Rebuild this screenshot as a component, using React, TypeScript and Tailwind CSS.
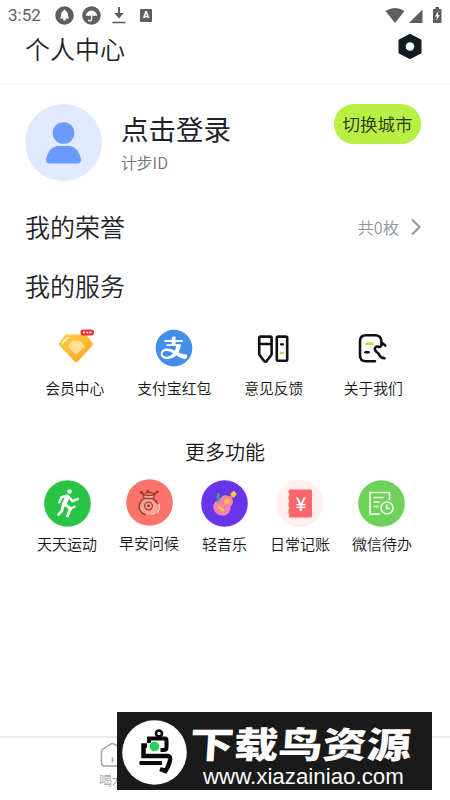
import type { ReactNode } from "react";
import { AiFillAlipayCircle } from "react-icons/ai";

type Item = {
  label: string;
  icon: ReactNode;
};

const VipIcon = () => (
  <svg width="40" height="40" viewBox="0 0 40 40">
    <defs>
      <linearGradient id="gem" x1="0" y1="0" x2="1" y2="1">
        <stop offset="0" stopColor="#ffd04a" />
        <stop offset="1" stopColor="#fba21c" />
      </linearGradient>
    </defs>
    <path
      d="M12 6.500h17.500q1.500 0 2.500 1.200L37.600 15q.8 1.200-.2 2.500L23 33.300q-1.800 1.700-3.600 0L4.400 17.500q-1-1.300-.1-2.500L9.500 7.700q1-1.200 2.500-1.200z"
      fill="url(#gem)"
    />
    <path d="M17 13h8.500l4.500 5.500-7.700 7.300q-1.300 1-2.600 0L13 18.500z" fill="#ffdf90" />
    <path d="M7.500 15l4.500-4.800 2-.4" stroke="#fff" strokeWidth="1.300" fill="none" strokeLinecap="round" />
    <rect x="25.500" y="1.500" width="13.500" height="6" rx="2.800" fill="#e8333a" />
    <path d="M28 4.500h2M31.200 4.500h2M34.400 4.500h2" stroke="#fff" strokeWidth="1.700" />
  </svg>
);

const FeedbackIcon = () => (
  <svg width="40" height="40" viewBox="0 0 40 40" fill="none" stroke="#111" strokeWidth="2.600" strokeLinejoin="round" strokeLinecap="round">
    <path d="M5.200 10q0-1.400 1.400-1.400h9.600q1.400 0 1.400 1.400v16.500l-4.700 6.300q-1.500 1.500-3 0L5.200 26.500zM5.200 16h12.400" />
    <rect x="22.800" y="8.600" width="10.400" height="24.200" rx="1.500" />
    <path d="M27 16.300h2" strokeWidth="2.200" />
    <path d="M27 25h2" stroke="#b3e748" strokeWidth="2.600" />
  </svg>
);

const AboutIcon = () => (
  <svg width="40" height="40" viewBox="0 0 40 40" fill="none" stroke="#111" strokeWidth="2.600" strokeLinejoin="round" strokeLinecap="round">
    <path d="M22 33.300H13q-6 0-6-6V13.300q0-6 6-6h9q6.300 0 6.500 6.500v2.500M28.500 14.500l3.800 3" />
    <path d="M28.500 15c.2 3.500-1.200 4.500-3.200 3.700-2.200-.8-4 .8-3.300 3.300.8 2.500 3 2 4 4.500.8 2 2.500 3.500 5.500 3.800" />
    <path d="M12.500 15.700h8" stroke="#b3e748" strokeLinecap="butt" />
    <path d="M12.500 24.300h3" />
  </svg>
);

const RunIcon = () => (
  <svg width="47" height="47" viewBox="0 0 47 47" fill="none" stroke="#fff" strokeLinecap="round" strokeLinejoin="round">
    <circle cx="23.500" cy="23.500" r="23.300" fill="#28c445" stroke="none" />
    <circle cx="25.500" cy="11.500" r="2.300" fill="#fff" stroke="none" />
    <path d="M23.500 17l-3.500 7.500" strokeWidth="4.500" />
    <path d="M22.500 15.800l-5 1.500-2.300 5M25 17l3.500 4.200 5.300-2.200" strokeWidth="2.500" />
    <path d="M21 24.500l5.500 4-3 7.500M18.800 26.500l-1 4.500-3.300 3.500" strokeWidth="2.900" />
    <path d="M27 28.500l4-2" strokeWidth="2" />
  </svg>
);

const MorningIcon = () => (
  <svg width="47" height="47" viewBox="0 0 47 47" fill="none" stroke="#9b3c36" strokeWidth="1.300" strokeLinecap="round" strokeLinejoin="round">
    <circle cx="23.500" cy="23.500" r="23.300" fill="#f9746a" stroke="none" />
    <path d="M18 19.500q-4.500 3-5 8.500 .8 6.500 7 8h6q6-2 6.500-8.500-.3-5-5-8z" fill="#fba293" stroke="none" />
    <path d="M18 19.500q-4.500 3-5 8.500 .5 5.500 6 7.500" strokeWidth="1.500" />
    <path d="M17 15.500q5.500 2 12 0-2 2-1 4H18q.5-2-1-4z" fill="#fbb09f" />
    <path d="M14.500 14l3.500 .8M20 14q2.500-2 6 0M27.500 14.500l4-1M27 20l5 5M30 21l1 3" />
    <circle cx="22.500" cy="27" r="3.800" />
    <circle cx="22.500" cy="27" r="1.400" fill="#9b3c36" stroke="none" />
    <path d="M33 25q1.500 5-1.500 8M27 35l2-1" stroke="#ffdacb" />
    <path d="M15 13.300h1M21.500 12h.3M31 12.800h.5" strokeWidth="2.400" />
  </svg>
);

const MusicIcon = () => (
  <svg width="47" height="47" viewBox="0 0 47 47">
    <circle cx="23.500" cy="23.500" r="23.300" fill="#6835eb" />
    <path d="M28 20l4-5" stroke="#f26c9b" strokeWidth="3.500" />
    <path
      d="M14 22q4-1 6-4.500 3-3.500 7.500-1.500 5 2.500 4.500 6.500-.5 2.500-2.500 4 .5 6-4.500 8.500-6.500 2-10.500-2.500-4.500-5.500-.5-10.500z"
      fill="#f681ad"
    />
    <circle cx="26" cy="21.200" r="2.700" fill="#ffc62f" />
    <path d="M18 27l3.800 3" stroke="#ffc62f" strokeWidth="2.600" strokeLinecap="round" />
    <path d="M31 14l1.800-1.700 1.500 1.700-1.500 1.800z" fill="#ffc62f" stroke="#ffc62f" strokeWidth="2.600" strokeLinejoin="round" />
    <path d="M16.500 13.500q2 1.500 .5 3.200-1 1.500 .8 2.300 .2 1.500-2 2.500" stroke="#39aa80" strokeWidth="2.300" fill="none" />
  </svg>
);

const LedgerIcon = () => (
  <div className="relative flex h-[47px] w-[47px] items-center justify-center rounded-full bg-[#ffefed]">
    <svg width="47" height="47" viewBox="0 0 47 47">
      <rect x="12.500" y="9.500" width="23.500" height="28" rx="1.500" fill="#fb666a" />
      <path d="M12.200 13v24" stroke="#ffefed" strokeWidth="2" strokeDasharray="3 3.800" />
    </svg>
    <span className="absolute left-[17px] top-[12px] w-[15px] text-center font-['Noto_Sans_CJK_SC'] text-[19px] font-medium leading-[22px] text-white">
      ¥
    </span>
  </div>
);

const TodoIcon = () => (
  <svg width="47" height="47" viewBox="0 0 47 47" fill="none" stroke="#f1ffe9" strokeWidth="1.700" strokeLinejoin="round">
    <circle cx="23.500" cy="23.500" r="23.300" fill="#6ed159" stroke="none" />
    <path d="M31.500 20V12.500h-19.500V34H22" />
    <path d="M15.500 17.500h10M15.500 22h6M15.500 26.500h5" />
    <circle cx="29" cy="28" r="6" />
    <path d="M28.700 24.500v4h3.500" />
  </svg>
);

const services: Item[] = [
  { label: "会员中心", icon: <VipIcon /> },
  { label: "支付宝红包", icon: <AiFillAlipayCircle size={42} color="#438ee8" /> },
  { label: "意见反馈", icon: <FeedbackIcon /> },
  { label: "关于我们", icon: <AboutIcon /> },
];

const features: Item[] = [
  { label: "天天运动", icon: <RunIcon /> },
  { label: "早安问候", icon: <MorningIcon /> },
  { label: "轻音乐", icon: <MusicIcon /> },
  { label: "日常记账", icon: <LedgerIcon /> },
  { label: "微信待办", icon: <TodoIcon /> },
];

const StatusBar = () => (
  <div className="flex h-[30px] items-center pl-[8px] pr-[7px] text-[#5e5e5e]">
    <span className="w-[47px] font-[Roboto] text-[17px] font-normal leading-none">3:52</span>
    <svg width="19" height="19" viewBox="0 0 19 19">
      <circle cx="9.500" cy="9.500" r="9.300" fill="#5e5e5e" />
      <path d="M9.500 3.500q1.200 0 1.200 1.500 2.300 1 2.300 5l1 2.500H5L6 10q0-4 2.300-5 0-1.500 1.200-1.500zM8.300 12.500h2.400v2H8.300z" fill="#fff" />
    </svg>
    <svg className="ml-[8px]" width="19" height="19" viewBox="0 0 19 19">
      <circle cx="9.500" cy="9.500" r="9.300" fill="#5e5e5e" />
      <path d="M3.700 10q.8-5 5.800-5.500 5 .5 5.800 5.500-1.500-1.200-2.900 0-1.400-1.200-2.900 0-1.500-1.200-2.900 0-1.400-1.200-2.900 0z" fill="#fff" />
      <path d="M9.500 9v4.500q0 1.500-1.500 1.500t-1.500-1.300" fill="none" stroke="#fff" strokeWidth="1.300" />
    </svg>
    <svg className="ml-[11px]" width="14" height="18" viewBox="0 0 14 18">
      <path d="M7 1v8" stroke="#5e5e5e" strokeWidth="2" />
      <path d="M2.300 7h9.400L7 12.500z" fill="#5e5e5e" />
      <path d="M.5 16.500h13" stroke="#5e5e5e" strokeWidth="1.600" />
    </svg>
    <span className="ml-[14px] flex h-[13px] w-[12px] items-center justify-center rounded-[1px] bg-[#5e5e5e] font-[Roboto] text-[9px] font-black leading-[13px] text-white">
      A
    </span>
    <svg className="ml-auto" width="58" height="18" viewBox="0 0 58 18" fill="#5e5e5e">
      <path d="M.5 5Q10 -1 19.500 5L10 17z" />
      <path d="M37.500 3.500V17H24z" />
      <path d="M48 3h2.500V1h3.500v2h2.500v14H48z" />
      <path d="M53.500 4.500l-3.500 6h2l-.8 4.500 3.500-6h-2z" fill="#fff" />
    </svg>
  </div>
);

const Watermark = () => (
  <div className="absolute left-[117px] top-[712px] flex h-[78px] w-[315px] bg-[#1a1a1a]">
    <svg className="ml-[5px] mt-[8px] shrink-0" width="65" height="65" viewBox="0 0 65 65" fill="none" stroke="#080808" strokeWidth="4.500">
      <circle cx="32.500" cy="32.500" r="32.300" fill="#fff" stroke="none" />
      <circle cx="37" cy="13.500" r="3" strokeWidth="2.600" />
      <path d="M27 23v-4.500H43q1.500 0 1.500 2v7q0 2.500-3 2.500h-3" strokeWidth="4" />
      <path d="M25 25.500h-3.500v10.500h24q3 0 2.500 4-1 6-4.500 11l-5.500-2" />
      <path d="M17.500 43h22.500" strokeWidth="4" />
      <circle cx="32.500" cy="26.500" r="4.800" fill="#22d45a" stroke="none" />
    </svg>
    <div className="flex flex-col">
      <span className="ml-[3px] mt-[7px] h-[46px] origin-left -skew-x-3 scale-x-[1.230] whitespace-nowrap text-[36px] font-black leading-[46px] text-white">
        下载鸟资源
      </span>
      <span className="ml-[16px] mt-[1px] whitespace-nowrap font-['Liberation_Sans'] text-[22.300px] font-normal leading-[22px] text-white">
        www.xiazainiao.com
      </span>
    </div>
  </div>
);

const App = () => {
  return (
    <div className="relative flex h-[800px] w-[450px] flex-col overflow-hidden bg-white font-['Noto_Sans_CJK_SC',sans-serif] font-[350] text-[#1d2228]">
      <StatusBar />

      <header className="flex h-[55px] justify-between border-b-2 border-[#f7f7f7] pl-[25px] pr-[27px]">
        <h1 className="text-[25px] leading-[36px]">个人中心</h1>
        <svg className="mt-[3px]" width="26" height="27" viewBox="0 0 26 27">
          <path d="M13 2L23.500 7.500v12L13 25 2.500 19.500v-12z" fill="#111c24" stroke="#111c24" strokeWidth="2" strokeLinejoin="round" />
          <circle cx="13" cy="13.500" r="4.300" fill="#fff" />
        </svg>
      </header>

      {/* User card */}
      <section className="mt-[19px] flex h-[77px] pl-[25px] pr-[29px]">
        <div className="flex h-[77px] w-[77px] items-center justify-center rounded-full bg-[#e0e9ff]">
          <svg width="37" height="42" viewBox="0 0 37 42" fill="#6c99fd">
            <circle cx="18.500" cy="11" r="10.800" />
            <path d="M12 24h13q8 1 11 13 .5 4.500-4 4.500H5q-4.500 0-4-4.500 3-12 11-13z" />
          </svg>
        </div>
        <div className="ml-[19px] flex-1">
          <div className="mt-[4px] text-[27.500px] font-normal leading-[40px]">点击登录</div>
          <div className="mt-[3px] text-[15.800px] leading-[24px] text-[#6d7380]">计步ID</div>
        </div>
        <button className="h-[40px] w-[87px] rounded-full bg-[#b8f144] text-[17.500px] leading-[40px] text-[#283017]">
          切换城市
        </button>
      </section>

      <section className="mt-[26px] flex h-[40px] items-center pl-[25px] pr-[28px]">
        <h2 className="flex-1 text-[25px]">我的荣誉</h2>
        <span className="text-[16.300px] text-[#8e939e]">共0枚</span>
        <svg className="ml-[11px]" width="12" height="18" viewBox="0 0 12 18" fill="none" stroke="#969aa4" strokeWidth="2.200">
          <path d="M2 1.500L9.500 9 2 16.500" />
        </svg>
      </section>

      <h2 className="mt-[19px] pl-[25px] text-[25px] leading-[39px]">我的服务</h2>

      <div className="mt-[22px] grid grid-cols-4 pl-[25px] pr-[27px]">
        {services.map((item) => (
          <div key={item.label} className="flex flex-col items-center">
            <div className="flex h-[42px] items-center">{item.icon}</div>
            <span className="mt-[8px] text-[14.800px] leading-[22px] text-[#151515]">{item.label}</span>
          </div>
        ))}
      </div>

      <h3 className="mt-[38px] text-center text-[20px] leading-[30px] text-[#151515]">更多功能</h3>

      <div className="mt-[13px] flex justify-between pl-[37px] pr-[38px]">
        {features.map((item) => (
          <div key={item.label} className="flex flex-col items-center nth-2:-mt-[1px]">
            {item.icon}
            <span className="mt-[6px] text-[15px] leading-[22px] text-[#151515]">{item.label}</span>
          </div>
        ))}
      </div>

      {/* Bottom tab bar */}
      <nav className="mb-[10px] mt-auto flex h-[54px] border-t-2 border-[#ebebeb] px-[56px]">
        <div className="flex w-[112px] flex-col items-center text-[#a0a4ad]">
          <svg className="mt-[4px]" width="27" height="27" viewBox="0 0 27 27" fill="none" stroke="#a0a4ad" strokeWidth="1.600">
            <path d="M2 10.500q0-2 1.500-3L12 2q1.500-1 3 0l8.500 5.500q1.500 1 1.500 3V21q0 4-4 4H6q-4 0-4-4zM13.500 16v5" />
          </svg>
          <span className="mt-[2px] text-[13px] leading-[20px]">喝水</span>
        </div>
      </nav>

      <Watermark />
    </div>
  );
};

export default App;
